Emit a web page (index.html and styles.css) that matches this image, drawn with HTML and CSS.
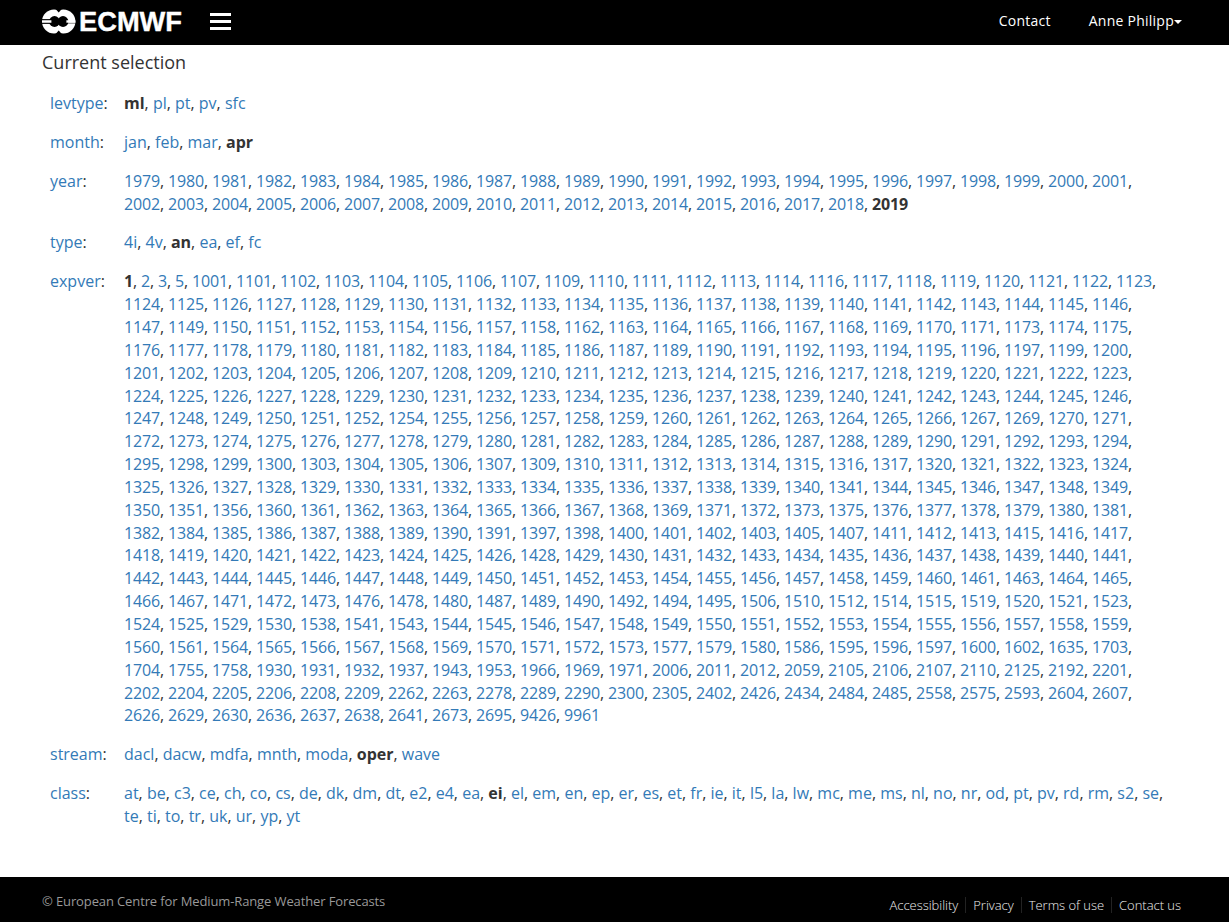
FILE: index.html
```
<!DOCTYPE html>
<html lang="en">
<head>
<meta charset="utf-8">
<title>ECMWF</title>
<link rel="stylesheet" href="styles.css">
</head>
<body>
<header class="topbar">
  <a class="brand" href="#" aria-label="ECMWF">
    <svg class="logo" viewBox="0 0 144 28" width="144" height="28">
      <g fill="#fff">
        <circle cx="13" cy="13.5" r="12" />
        <circle cx="22.4" cy="13.5" r="12" />
      </g>
      <path d="M14.6 1h6.2l-3.1 3.4zM14.6 26h6.2l-3.1-3.4z" />
      <circle cx="13.5" cy="13.5" r="5.4" />
      <circle cx="22" cy="13.5" r="5.4" />
      <path d="M16 11h4v5h-4z" />
      <path d="M1 13.5h9" stroke="#000" stroke-width="4.8" />
      <path d="M1 13.5h9.4M25.4 13.5h9" stroke="#fff" stroke-width="2.6" />
      <path d="M26 15.3h8.4" stroke="#000" stroke-opacity=".5" stroke-width=".9" />
      <text class="logo-text" x="38" y="23.2" textLength="103" lengthAdjust="spacingAndGlyphs">ECMWF</text>
    </svg>
  </a>
  <button class="menu" aria-label="Menu"><span class="bar"></span><span class="bar"></span><span class="bar"></span></button>
  <nav class="user-nav">
    <a href="#">Contact</a>
    <a href="#">Anne Philipp<span class="caret"></span></a>
  </nav>
</header>
<main class="content">
  <h4 class="heading">Current selection</h4>
  <div class="selection" id="selection"></div>
</main>
<footer class="footer">
  <p class="copyright">© European Centre for Medium-Range Weather Forecasts</p>
  <ul class="footer-links">
    <li><a href="#">Accessibility</a></li>
    <li><a href="#">Privacy</a></li>
    <li><a href="#">Terms of use</a></li>
    <li><a href="#">Contact us</a></li>
  </ul>
</footer>
<script src="selection.js"></script>
</body>
</html>
```
FILE: styles.css
```
* { box-sizing: border-box; }
body {
  margin: 0;
  height: 922px;
  overflow: hidden;
  display: flex;
  flex-direction: column;
  font-family: "Open Sans", "Noto Sans", sans-serif;
  font-size: 16px;
  line-height: 1.42857143;
  color: #333;
  background: #fff;
}
a { color: #337ab7; text-decoration: none; }
.topbar {
  flex: none;
  height: 45px;
  padding: 0 47px 0 41px;
  display: flex;
  align-items: center;
  background: #000;
}
.brand { display: flex; margin-top: -2px; }
.logo { display: block; overflow: visible; }
.logo-text {
  font-family: "Liberation Sans", Arial, sans-serif;
  font-weight: bold;
  font-size: 28.5px;
  line-height: 28px;
  fill: #fff;
  stroke: #fff;
  stroke-width: .4px;
}
.menu {
  display: flex;
  flex-direction: column;
  gap: 4px;
  margin: -2px 0 0 25px;
  padding: 0;
  border: 0;
  background: none;
}
.bar { width: 21px; height: 3px; background: #fff; }
.user-nav {
  margin: -4px 0 0 auto;
  display: flex;
  gap: 38px;
  font-size: 14px;
}
.user-nav a { display: flex; align-items: center; color: #fff; letter-spacing: 0.25px; }
.caret {
  margin-top: 2px;
  border-top: 4px solid #fff;
  border-left: 4px solid transparent;
  border-right: 4px solid transparent;
}
.content { flex: 1; padding: 7px 42px 0; }
.heading {
  margin: 0;
  font-size: 18px;
  font-weight: 400;
  line-height: 20px;
}
.selection { padding-top: 12.1px; }
.row { display: flex; padding: 8px 16px 8px 8px; }
.label { flex: none; width: 74px; }
.values { flex: 1; }
.values b { font-weight: 700; }
.num { letter-spacing: -0.15px; }
.footer {
  flex: none;
  height: 45px;
  padding: 0 48px 0 42px;
  display: flex;
  justify-content: space-between;
  font-size: 13px;
  line-height: 18px;
  color: #999;
  background: #000;
}
.copyright { margin: 15px 0 0; letter-spacing: -0.12px; }
.footer-links {
  margin: 20px 0 0;
  padding: 0;
  display: flex;
  list-style: none;
}
.footer-links li { height: 16px; line-height: 16px; font-weight: 300; letter-spacing: -0.03px; }
.footer-links li + li {
  margin-left: 7px;
  padding-left: 7px;
  border-left: 1px solid #222;
}
.footer-links a { color: #eee; }
```
FILE: selection.js
```
const fields = [
  ["levtype", "ml", "ml pl pt pv sfc"],
  ["month", "apr", "jan feb mar apr"],
  ["year", "2019", Array.from({ length: 41 }, (_, i) => 1979 + i).join(" ")],
  ["type", "an", "4i 4v an ea ef fc"],
  ["expver", "1", `1 2 3 5 1001 1101 1102 1103 1104 1105 1106 1107 1109 1110 1111 1112 1113 1114 1116 1117 1118 1119 1120 1121 1122 1123
1124 1125 1126 1127 1128 1129 1130 1131 1132 1133 1134 1135 1136 1137 1138 1139 1140 1141 1142 1143 1144 1145 1146
1147 1149 1150 1151 1152 1153 1154 1156 1157 1158 1162 1163 1164 1165 1166 1167 1168 1169 1170 1171 1173 1174 1175
1176 1177 1178 1179 1180 1181 1182 1183 1184 1185 1186 1187 1189 1190 1191 1192 1193 1194 1195 1196 1197 1199 1200
1201 1202 1203 1204 1205 1206 1207 1208 1209 1210 1211 1212 1213 1214 1215 1216 1217 1218 1219 1220 1221 1222 1223
1224 1225 1226 1227 1228 1229 1230 1231 1232 1233 1234 1235 1236 1237 1238 1239 1240 1241 1242 1243 1244 1245 1246
1247 1248 1249 1250 1251 1252 1254 1255 1256 1257 1258 1259 1260 1261 1262 1263 1264 1265 1266 1267 1269 1270 1271
1272 1273 1274 1275 1276 1277 1278 1279 1280 1281 1282 1283 1284 1285 1286 1287 1288 1289 1290 1291 1292 1293 1294
1295 1298 1299 1300 1303 1304 1305 1306 1307 1309 1310 1311 1312 1313 1314 1315 1316 1317 1320 1321 1322 1323 1324
1325 1326 1327 1328 1329 1330 1331 1332 1333 1334 1335 1336 1337 1338 1339 1340 1341 1344 1345 1346 1347 1348 1349
1350 1351 1356 1360 1361 1362 1363 1364 1365 1366 1367 1368 1369 1371 1372 1373 1375 1376 1377 1378 1379 1380 1381
1382 1384 1385 1386 1387 1388 1389 1390 1391 1397 1398 1400 1401 1402 1403 1405 1407 1411 1412 1413 1415 1416 1417
1418 1419 1420 1421 1422 1423 1424 1425 1426 1428 1429 1430 1431 1432 1433 1434 1435 1436 1437 1438 1439 1440 1441
1442 1443 1444 1445 1446 1447 1448 1449 1450 1451 1452 1453 1454 1455 1456 1457 1458 1459 1460 1461 1463 1464 1465
1466 1467 1471 1472 1473 1476 1478 1480 1487 1489 1490 1492 1494 1495 1506 1510 1512 1514 1515 1519 1520 1521 1523
1524 1525 1529 1530 1538 1541 1543 1544 1545 1546 1547 1548 1549 1550 1551 1552 1553 1554 1555 1556 1557 1558 1559
1560 1561 1564 1565 1566 1567 1568 1569 1570 1571 1572 1573 1577 1579 1580 1586 1595 1596 1597 1600 1602 1635 1703
1704 1755 1758 1930 1931 1932 1937 1943 1953 1966 1969 1971 2006 2011 2012 2059 2105 2106 2107 2110 2125 2192 2201
2202 2204 2205 2206 2208 2209 2262 2263 2278 2289 2290 2300 2305 2402 2426 2434 2484 2485 2558 2575 2593 2604 2607
2626 2629 2630 2636 2637 2638 2641 2673 2695 9426 9961`],
  ["stream", "oper", "dacl dacw mdfa mnth moda oper wave"],
  ["class", "ei", "at be c3 ce ch co cs de dk dm dt e2 e4 ea ei el em en ep er es et fr ie it l5 la lw mc me ms nl no nr od pt pv rd rm s2 se te ti to tr uk ur yp yt"],
];

document.getElementById("selection").innerHTML = fields.map(([name, current, list]) => {
  const values = list.split(/\s+/);
  const numeric = /^\d+$/.test(values[0]) ? " num" : "";
  const items = values.map(v => v === current ? `<b>${v}</b>` : `<a href="#">${v}</a>`).join(", ");
  return `<div class="row"><div class="label"><a href="#">${name}</a>:</div><div class="values${numeric}">${items}</div></div>`;
}).join("");
```
